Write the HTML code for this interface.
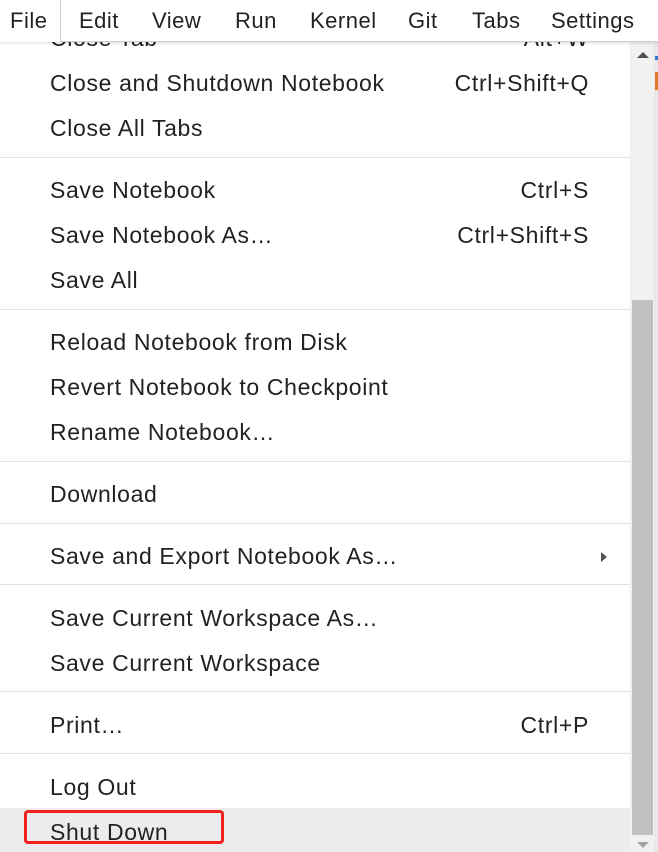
<!DOCTYPE html>
<html><head><meta charset="utf-8"><style>
body{margin:0;width:658px;height:852px;overflow:hidden;background:#fff;position:relative;font-family:"Liberation Sans","Noto Sans CJK SC",sans-serif;color:#222;}
.t{position:absolute;font-size:23px;line-height:30px;white-space:nowrap;letter-spacing:0.65px;}
.l{left:50px}
.r{right:69px}
.sep{position:absolute;left:0;width:630px;height:1px;background:#e3e3e3}
.bar{position:absolute;left:0;top:0;width:658px;height:41px;background:#fff;border-bottom:1px solid #cfcfcf;box-shadow:0 1px 3px rgba(0,0,0,.15);z-index:5}
.m{position:absolute;top:6px;font-size:22px;line-height:30px;color:#222;letter-spacing:0.5px}
</style></head><body>
<div style="position:absolute;left:654px;top:42px;width:4px;height:810px;background:#e8e8e8"></div>
<div style="position:absolute;left:655px;top:56px;width:3px;height:4px;background:#2a7ad6"></div>
<div style="position:absolute;left:655px;top:72px;width:3px;height:18px;background:#e07a2a"></div>
<div style="position:absolute;left:0;top:808px;width:630px;height:44px;background:#ececec"></div>
<div class="t l" style="top:23px">Close Tab</div><div class="t r" style="top:23px">Alt+W</div>
<div class="t l" style="top:68px">Close and Shutdown Notebook</div><div class="t r" style="top:68px">Ctrl+Shift+Q</div>
<div class="t l" style="top:113px">Close All Tabs</div>
<div class="sep" style="top:157px"></div>
<div class="t l" style="top:175px">Save Notebook</div><div class="t r" style="top:175px">Ctrl+S</div>
<div class="t l" style="top:220px">Save Notebook As…</div><div class="t r" style="top:220px">Ctrl+Shift+S</div>
<div class="t l" style="top:265px">Save All</div>
<div class="sep" style="top:309px"></div>
<div class="t l" style="top:327px">Reload Notebook from Disk</div>
<div class="t l" style="top:372px">Revert Notebook to Checkpoint</div>
<div class="t l" style="top:417px">Rename Notebook…</div>
<div class="sep" style="top:461px"></div>
<div class="t l" style="top:479px">Download</div>
<div class="sep" style="top:523px"></div>
<div class="t l" style="top:541px">Save and Export Notebook As…</div>
<div style="position:absolute;left:601px;top:552px;width:0;height:0;border-top:5px solid transparent;border-bottom:5px solid transparent;border-left:6px solid #555"></div>
<div class="sep" style="top:584px"></div>
<div class="t l" style="top:603px">Save Current Workspace As…</div>
<div class="t l" style="top:648px">Save Current Workspace</div>
<div class="sep" style="top:691px"></div>
<div class="t l" style="top:710px">Print…</div><div class="t r" style="top:710px">Ctrl+P</div>
<div class="sep" style="top:753px"></div>
<div class="t l" style="top:772px">Log Out</div>
<div class="t l" style="top:817px">Shut Down</div>
<div style="position:absolute;left:24px;top:810px;width:194px;height:28px;border:3px solid #f0201a;border-radius:4px"></div>
<div style="position:absolute;left:630px;top:42px;width:24px;height:810px;background:#f1f1f1"></div>
<div style="position:absolute;left:632px;top:300px;width:21px;height:535px;background:#c1c1c1"></div>
<div style="position:absolute;left:637px;top:52px;width:0;height:0;border-left:6px solid transparent;border-right:6px solid transparent;border-bottom:6px solid #505050"></div>
<div style="position:absolute;left:637px;top:842px;width:0;height:0;border-left:6px solid transparent;border-right:6px solid transparent;border-top:6px solid #a3a3a3"></div>
<div class="bar">
<div style="position:absolute;left:0;top:0;width:60px;height:42px;background:#fff;border-right:1px solid #cfcfcf;z-index:2"></div>
<div class="m" style="left:10px;z-index:3">File</div>
<div class="m" style="left:79px">Edit</div>
<div class="m" style="left:152px">View</div>
<div class="m" style="left:235px">Run</div>
<div class="m" style="left:310px">Kernel</div>
<div class="m" style="left:408px">Git</div>
<div class="m" style="left:472px">Tabs</div>
<div class="m" style="left:551px">Settings</div>
</div>
</body></html>
